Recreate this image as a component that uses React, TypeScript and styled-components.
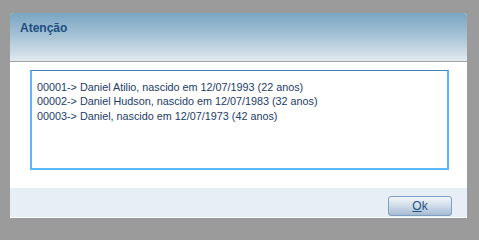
import React from "react";
import styled, { createGlobalStyle } from "styled-components";

const GlobalStyle = createGlobalStyle`
  html, body {
    margin: 0;
    padding: 0;
    background: #9b9b9b;
    font-family: "Liberation Sans", Arial, sans-serif;
  }
`;

const Screen = styled.div`
  width: 479px;
  height: 232px;
  padding: 13px 0 0 10px;
  box-sizing: border-box;
`;

const Dialog = styled.div`
  width: 457px;
  display: flex;
  flex-direction: column;
  background: #ffffff;
  border-radius: 4px 4px 0 0;
  overflow: hidden;
`;

const Header = styled.div`
  height: 49px;
  box-sizing: border-box;
  padding: 8px 10px 0;
  background: linear-gradient(to bottom, #79a5c2 0%, #a9c4d6 50%, #e1e9ee 100%);
  border-bottom: 1px solid #a3a3a3;
`;

const Title = styled.h1`
  margin: 0;
  font-size: 12px;
  font-weight: bold;
  color: #1d4e82;
  line-height: 14px;
`;

const Body = styled.div`
  height: 126px;
  box-sizing: border-box;
  padding: 8px 18px 0 20px;
`;

const MessageBox = styled.div`
  height: 100px;
  box-sizing: border-box;
  border: 2px solid #5cb6fb;
  border-top: 1px solid #3f82bd;
  padding: 9px 5px 0 5px;
  font-size: 10.8px;
  line-height: 14.3px;
  color: #1b3b69;
`;

const Line = styled.div`
  white-space: nowrap;
`;

const Footer = styled.div`
  height: 30px;
  box-sizing: border-box;
  background: #e8eef6;
  border-bottom: 1px solid #ffffff;
  display: flex;
  justify-content: flex-end;
  align-items: flex-start;
  padding: 8px 15px 0 0;
`;

const Button = styled.button`
  width: 64px;
  height: 20px;
  box-sizing: border-box;
  border: 1px solid #7f9fc2;
  border-radius: 3px;
  background: linear-gradient(to bottom, #f3f6fa 0%, #d3dfeb 45%, #a6bbd2 100%);
  font-family: "Liberation Sans", Arial, sans-serif;
  font-size: 12px;
  color: #1f4f80;
  padding: 0;
  line-height: 16px;
  cursor: pointer;
`;

const Hotkey = styled.span`
  text-decoration: underline;
`;

const entries = [
  "00001-> Daniel Atilio, nascido em 12/07/1993 (22 anos)",
  "00002-> Daniel Hudson, nascido em 12/07/1983 (32 anos)",
  "00003-> Daniel, nascido em 12/07/1973 (42 anos)",
];

export default function App() {
  return (
    <Screen>
      <GlobalStyle />
      <Dialog>
        <Header>
          <Title>Atenção</Title>
        </Header>
        <Body>
          <MessageBox>
            {entries.map((e) => (
              <Line key={e}>{e}</Line>
            ))}
          </MessageBox>
        </Body>
        <Footer>
          <Button>
            <Hotkey>O</Hotkey>k
          </Button>
        </Footer>
      </Dialog>
    </Screen>
  );
}
